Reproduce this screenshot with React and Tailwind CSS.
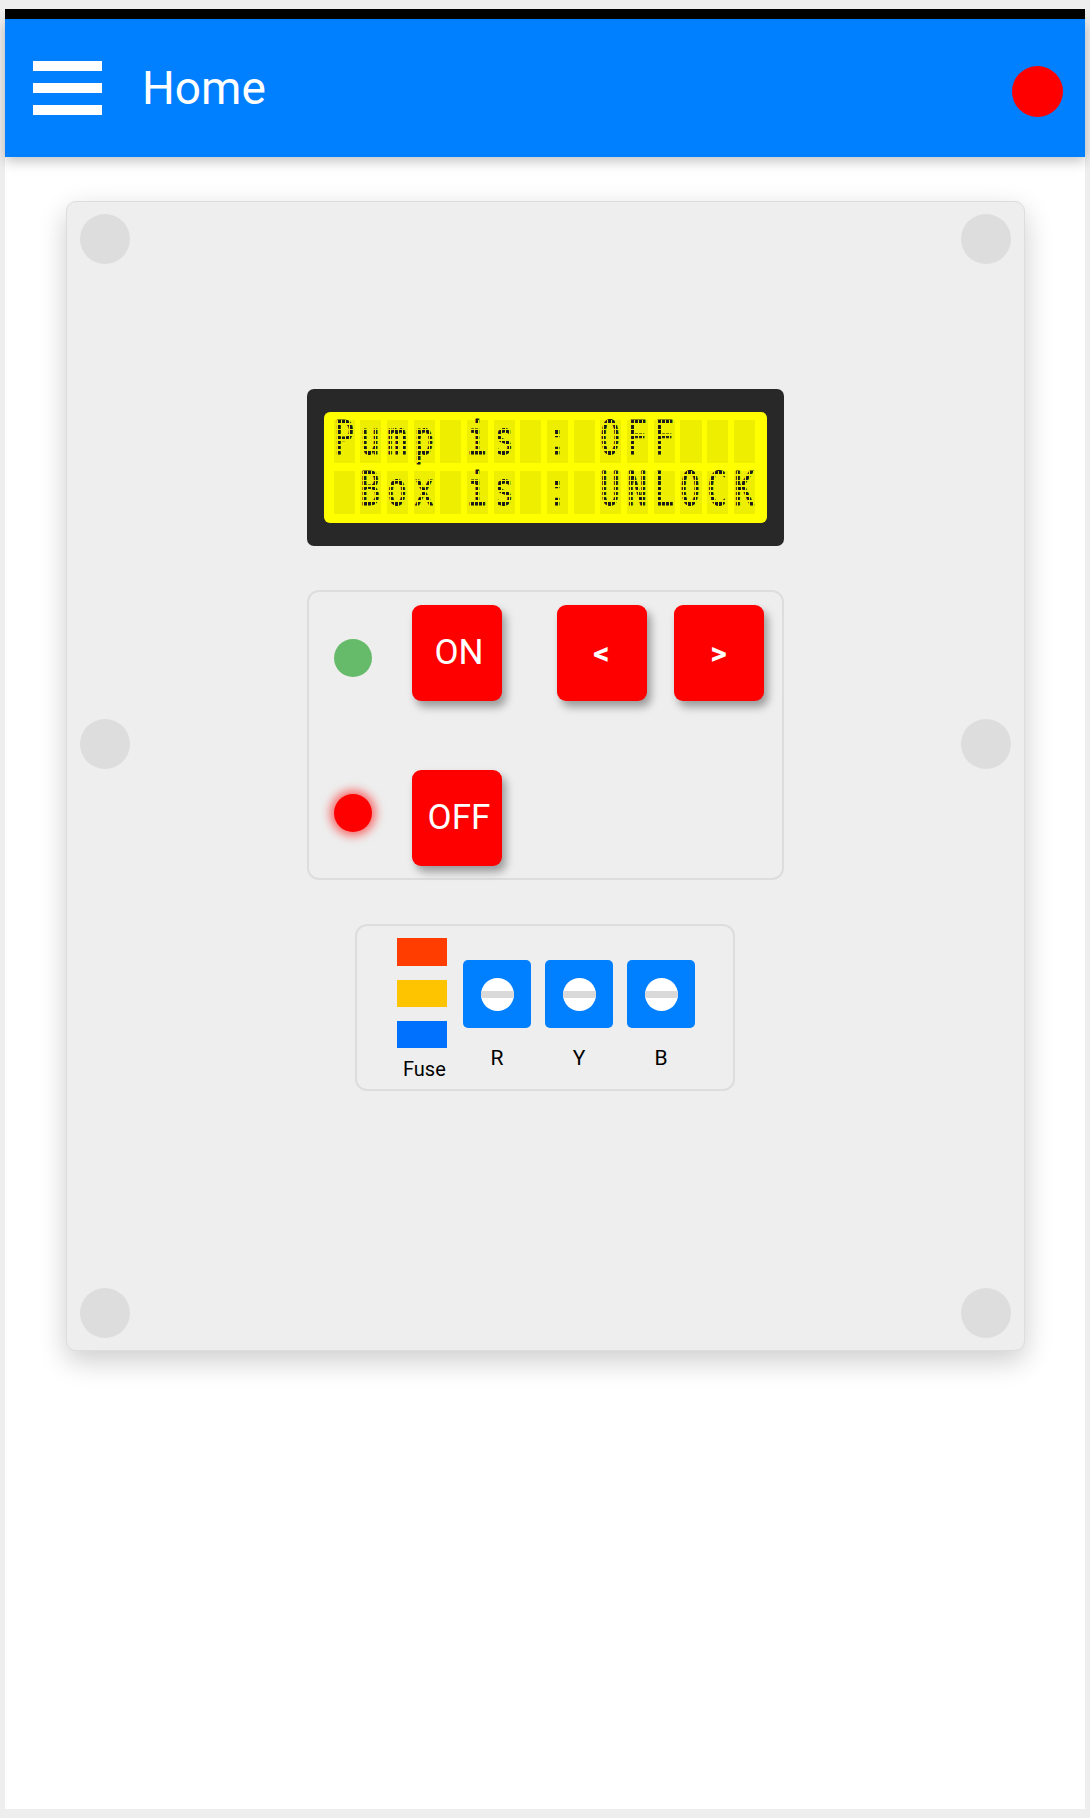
const row1 = 'Pump is : OFF   '
const row2 = ' Box is : UNLOCK'

function LcdRow({ text }) {
  return (
    <div className="grid grid-cols-[repeat(16,21.1px)] gap-x-[5.6px]">
      {text.split('').map((ch, i) => (
        <div key={i} className="relative h-[43px] w-[21.1px] bg-[#eeee00]">
          <span className="absolute left-0 top-0 origin-top-left scale-x-[0.72] font-['DejaVu_Sans_Mono',monospace] text-[46px] font-normal leading-[0.8] text-[#1a1a1a] [-webkit-text-stroke:0.8px_#1a1a1a]">
            {ch === ' ' ? '\u00a0' : ch}
          </span>
          <div className="absolute inset-0 bg-[image:repeating-linear-gradient(90deg,transparent_0_3px,#eeee00_3px_4px),repeating-linear-gradient(180deg,transparent_0_3.4px,#eeee00_3.4px_5.2px)]" />
        </div>
      ))}
    </div>
  )
}

function Screw({ className }) {
  return <div className={`absolute h-[50px] w-[50px] rounded-full bg-[#dddddd] ${className}`} />
}

function RedButton({ children, bold }) {
  return (
    <button
      className={`flex h-[96px] w-[90px] items-center justify-center rounded-[9px] bg-[#ff0000] text-white shadow-[4px_6px_9px_rgba(0,0,0,0.35)] ${
        bold ? 'text-[32px] font-bold' : 'pl-[5px] text-[35px]'
      }`}
    >
      {children}
    </button>
  )
}

function Terminal({ label }) {
  return (
    <div className="flex w-[68px] flex-col items-center">
      <div className="flex h-[68px] w-[68px] items-center justify-center rounded-[5px] bg-[#0080ff]">
        <div className="flex h-[33px] w-[33px] items-center overflow-hidden rounded-full bg-white">
          <div className="h-[7px] w-full bg-[#d9d9d9]" />
        </div>
      </div>
      <span className="mt-[18px] text-[21px] leading-[24px] text-black">{label}</span>
    </div>
  )
}

export default function App() {
  return (
    <div className="min-h-[1818px] bg-[#eeeeee] px-[5px] py-[9px] font-['Roboto',sans-serif]">
      <div className="min-h-[1800px] bg-white">
        <div className="h-[10px] bg-black" />
        <header className="relative z-10 flex h-[138px] items-center bg-[#0080ff] pl-[28px] pr-[22px] shadow-[0_4px_12px_rgba(0,0,0,0.25)]">
          <div className="flex w-[69px] flex-col gap-[12px]">
            <div className="h-[10px] bg-white" />
            <div className="h-[10px] bg-white" />
            <div className="h-[10px] bg-white" />
          </div>
          <h1 className="ml-[40px] text-[46px] font-normal text-white">Home</h1>
          <div className="ml-auto mt-[7px] h-[51px] w-[51px] rounded-full bg-[#ff0000]" />
        </header>

        <main className="pt-[44px]">
          <div className="relative mx-auto flex h-[1150px] w-[959px] flex-col items-center rounded-[10px] border border-[#dddddd] bg-[#eeeeee] pt-[187px] shadow-[0_10px_28px_rgba(0,0,0,0.2)]">
            <Screw className="left-[13px] top-[12px]" />
            <Screw className="right-[13px] top-[12px]" />
            <Screw className="left-[13px] top-[45%]" />
            <Screw className="right-[13px] top-[45%]" />
            <Screw className="bottom-[12px] left-[13px]" />
            <Screw className="bottom-[12px] right-[13px]" />

            {/* LCD */}
            <div className="h-[157px] w-[477px] rounded-[7px] bg-[#282828] px-[17px] py-[23px]">
              <div className="flex h-[111px] flex-col gap-[8px] rounded-[6px] bg-[#ffff00] px-[10px] pt-[8px]">
                <LcdRow text={row1} />
                <LcdRow text={row2} />
              </div>
            </div>

            {/* buttons */}
            <div className="mt-[44px] flex h-[290px] w-[477px] flex-col gap-[69px] rounded-[12px] border-2 border-[#dddddd] pl-[25px] pt-[13px]">
              <div className="flex items-center">
                <div className="mt-[10px] h-[38px] w-[38px] rounded-full bg-[#66bb6a]" />
                <div className="ml-[40px]">
                  <RedButton>ON</RedButton>
                </div>
                <div className="ml-[55px]">
                  <RedButton bold>&lt;</RedButton>
                </div>
                <div className="ml-[27px]">
                  <RedButton bold>&gt;</RedButton>
                </div>
              </div>
              <div className="flex items-center">
                <div className="mb-[10px] h-[38px] w-[38px] rounded-full bg-[#ff0000] shadow-[0_0_10px_4px_rgba(255,0,0,0.55)]" />
                <div className="ml-[40px]">
                  <RedButton>OFF</RedButton>
                </div>
              </div>
            </div>

            {/* fuse + terminals */}
            <div className="mt-[44px] flex h-[167px] w-[380px] items-start rounded-[12px] border-2 border-[#dddddd] pl-[40px] pt-[12px]">
              <div className="flex w-[50px] flex-col">
                <div className="h-[28px] bg-[#ff3d00]" />
                <div className="mt-[14px] h-[27px] bg-[#ffc400]" />
                <div className="mt-[14px] h-[27px] bg-[#0070ff]" />
                <span className="mt-[9px] whitespace-nowrap pl-[6px] text-[20px] leading-[24px] text-black">Fuse</span>
              </div>
              <div className="ml-[16px] mt-[22px] flex gap-[14px]">
                <Terminal label="R" />
                <Terminal label="Y" />
                <Terminal label="B" />
              </div>
            </div>
          </div>
        </main>
      </div>
    </div>
  )
}
